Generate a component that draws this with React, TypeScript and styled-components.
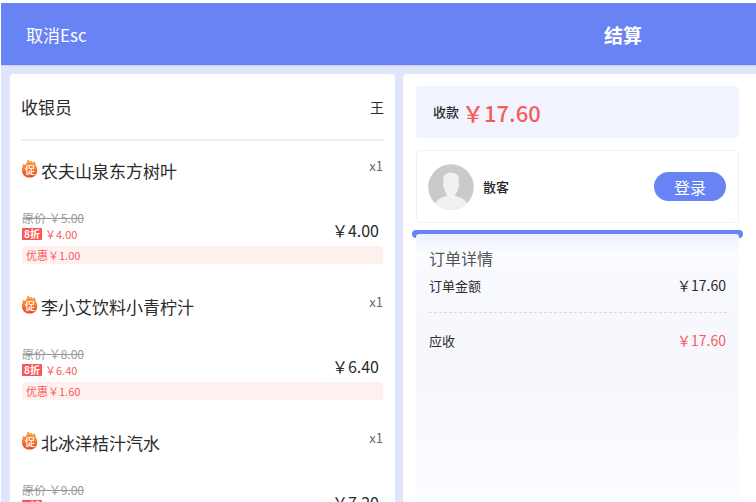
import React from "react";
import styled, { createGlobalStyle } from "styled-components";

const GlobalStyle = createGlobalStyle`
  *, *::before, *::after { box-sizing: border-box; }
  html, body, #root { height: 100%; }
  body {
    margin: 0;
    overflow: hidden;
    background: #fff;
    color: #2b2b2b;
    font-family: "Noto Sans CJK SC", "Noto Sans", sans-serif;
    font-size: 13px;
  }
  h1, h2, h3, p, ul, dl, dd { margin: 0; padding: 0; font-weight: 400; }
`;

const Page = styled.div`
  display: flex;
  flex-direction: column;
  height: 100%;
  padding: 3px 0 0 1px;
`;

const columns = "385fr 353fr";

const TopBar = styled.header`
  display: grid;
  grid-template-columns: ${columns};
  column-gap: 8px;
  align-items: center;
  flex: none;
  height: 63px;
  padding: 2px 0 0 9px;
  background: #6883f4;
  border-bottom: 1px solid #c8d2fb;
  color: #fff;
`;

const CancelButton = styled.button`
  justify-self: start;
  margin: 0;
  padding: 0 16px;
  border: 0;
  background: none;
  color: inherit;
  font: inherit;
  font-size: 17px;
  line-height: 24px;
`;

const PageTitle = styled.h1`
  padding-right: 114px;
  margin-left: auto;
  font-size: 19px;
  font-weight: 700;
  line-height: 28px;
`;

const Body = styled.main`
  display: grid;
  grid-template-columns: ${columns};
  column-gap: 8px;
  flex: 1;
  min-height: 0;
  padding: 8px 0 0 9px;
  background: #e0e5fc;
`;

const Panel = styled.section`
  min-width: 0;
  min-height: 0;
  overflow: hidden;
  background: #fff;
`;

const CartPanel = styled(Panel)`
  padding: 0 11px;
  border-radius: 4px 4px 0 0;
`;

const CashierRow = styled.div`
  display: flex;
  align-items: center;
  justify-content: space-between;
  height: 67px;
  border-bottom: 2px solid #eeeeee;
`;

const CashierLabel = styled.h2`
  font-size: 17px;
  line-height: 24px;
`;

const CashierName = styled.span`
  font-size: 14px;
  line-height: 20px;
`;

const ItemList = styled.ul`
  list-style: none;
`;

const Item = styled.li`
  height: 136px;
  padding: 16px 1px 0;
`;

const ItemHead = styled.div`
  display: flex;
  align-items: flex-start;
  height: 53px;
`;

const FlameIcon = styled.svg`
  flex: none;
  width: 16px;
  height: 20px;
  margin-top: 2px;
  margin-right: 3px;
`;

const ItemName = styled.h3`
  flex: 1;
  padding-top: 1px;
  font-size: 17px;
  line-height: 26px;
`;

const Quantity = styled.span`
  color: #666;
  font-size: 13px;
  line-height: 18px;
`;

const PriceRow = styled.div`
  display: flex;
  justify-content: space-between;
  height: 36px;
  padding-right: 4px;
`;

const OriginalPrice = styled.s`
  display: block;
  color: #999;
  font-size: 12px;
  line-height: 16px;
`;

const DiscountLine = styled.p`
  display: flex;
  align-items: center;
  gap: 3px;
  height: 16px;
  color: #f75b5b;
  font-size: 11px;
  line-height: 16px;
`;

const DiscountTag = styled.span`
  width: 20px;
  height: 12px;
  border-radius: 1px;
  background: #fb5656;
  color: #fff;
  font-size: 10px;
  font-weight: 700;
  line-height: 12px;
  text-align: center;
`;

const FinalPrice = styled.strong`
  padding-top: 8px;
  font-size: 16px;
  font-weight: 400;
  line-height: 24px;
`;

const Saving = styled.p`
  height: 18px;
  padding: 0 4px;
  border-radius: 3px;
  background: #fff0f0;
  color: #f75b5b;
  font-size: 11px;
  line-height: 18px;
`;

const CheckoutPanel = styled(Panel)`
  display: flex;
  flex-direction: column;
  padding: 12px 17px 0 13px;
  border-radius: 4px 0 0 0;
`;

const AmountBox = styled.div`
  display: flex;
  align-items: center;
  gap: 3px;
  flex: none;
  height: 52px;
  padding-left: 17px;
  border-radius: 4px;
  background: #f1f4fe;
`;

const StrongLabel = styled.span`
  font-weight: 500;
  line-height: 20px;
`;

const AmountValue = styled.strong`
  color: #f75b5b;
  font-size: 22px;
  font-weight: 500;
  line-height: 32px;
`;

const CustomerBox = styled.div`
  display: flex;
  align-items: center;
  gap: 9px;
  flex: none;
  height: 73px;
  margin-top: 12px;
  padding: 0 12px 0 11px;
  border: 1px solid #f1f1f2;
  border-radius: 4px;
`;

const Avatar = styled.svg`
  width: 46px;
  height: 46px;
`;

const LoginButton = styled.button`
  width: 72px;
  height: 29px;
  margin: 0 0 0 auto;
  padding: 0;
  border: 0;
  border-radius: 15px;
  background: #6883f4;
  color: #fff;
  font: inherit;
  font-size: 16px;
  line-height: 28px;
`;

const SlotBar = styled.div`
  flex: none;
  height: 8px;
  margin: 7px -4px 0;
  border-radius: 4px;
  background: #6883f4;
`;

const Receipt = styled.section`
  position: relative;
  flex: 1;
  margin-top: -4px;
  padding: 11px 11px 0 13px;
  border-radius: 3px 3px 0 0;
  background: linear-gradient(#edf1fe 0, #fbfcff 20px, #f9faff 40px, #f6f8fe 80px, #f7f8fe 160px, #fcfdff 100%);
`;

const ReceiptTitle = styled.h2`
  color: #555;
  font-size: 16px;
  line-height: 26px;
`;

const ReceiptRow = styled.div<{ $due?: boolean }>`
  display: flex;
  align-items: center;
  justify-content: space-between;
  height: ${(p) => (p.$due ? 54 : 28)}px;
  padding-right: 2px;

  dd {
    color: ${(p) => (p.$due ? "#f75b5b" : "inherit")};
    font-size: 14px;
  }
`;

const Divider = styled.svg`
  display: block;
  width: 100%;
  height: 1px;
  margin-top: 13px;
`;

const items = [
  { name: "农夫山泉东方树叶", original: "5.00", price: "4.00", saving: "1.00" },
  { name: "李小艾饮料小青柠汁", original: "8.00", price: "6.40", saving: "1.60" },
  { name: "北冰洋桔汁汽水", original: "9.00", price: "7.20", saving: "1.80" },
];

function PromoFlame() {
  return (
    <FlameIcon viewBox="0 0 16 20" role="img" aria-label="促销">
      <defs>
        <linearGradient id="flame" x1="0" y1="0" x2="0" y2="1">
          <stop offset="0" stopColor="#fda63c" />
          <stop offset="0.5" stopColor="#f97b30" />
          <stop offset="1" stopColor="#ea4a2b" />
        </linearGradient>
      </defs>
      <path
        d="M5.4 .6C7 1 8 2.2 8.2 3.4C8.8 3.1 9 2.5 8.9 1.8C10 2.2 10.7 3 10.9 3.9C11.8 3.5 12.4 2.8 12.6 2C13.5 3.4 13.2 5.2 13.7 6.6C14.8 8 15.2 9.6 15.2 11.4C15.2 15.6 12 18.6 7.8 18.6C3.4 18.6 0 15.6 0 11.4C0 9 .8 7 1.3 4.8C2 5.3 2.4 5.7 2.6 6.2C4.6 4.8 5.6 2.9 5.4 .6Z"
        fill="url(#flame)"
      />
      <text x="8" y="15" fill="#fff" fontSize="10" fontWeight="500" textAnchor="middle">促</text>
    </FlameIcon>
  );
}

function GuestAvatar() {
  return (
    <Avatar viewBox="0 0 46 46" aria-hidden="true">
      <defs>
        <clipPath id="avatar-clip">
          <circle cx="23" cy="23" r="22.8" />
        </clipPath>
      </defs>
      <g clipPath="url(#avatar-clip)">
        <rect width="46" height="46" fill="#cacaca" />
        <path
          d="M15.3 16C15 11.4 17.6 8.7 23 8.7C28.8 8.7 31.3 11.6 31 16.5L30.8 20C31.8 20.3 31.6 22.6 30.2 24.3C29.4 27.6 28.4 29.2 27.2 30.3L27.3 32.1C32.4 32.9 36.3 35.1 39 39.5L40 46H6L7.2 39.5C9.8 35.1 13.6 32.9 18.8 32.1L18.9 30.3C17.5 29 16.8 27.4 16.2 24.3C14.7 22.7 14.4 20.4 15.4 20Z"
          fill="#f0f1f3"
        />
      </g>
    </Avatar>
  );
}

export default function App() {
  return (
    <>
      <GlobalStyle />
      <Page>
        <TopBar>
          <CancelButton type="button">取消Esc</CancelButton>
          <PageTitle>结算</PageTitle>
        </TopBar>
        <Body>
          <CartPanel>
            <CashierRow>
              <CashierLabel>收银员</CashierLabel>
              <CashierName>王</CashierName>
            </CashierRow>
            <ItemList>
              {items.map((item) => (
                <Item key={item.name}>
                  <ItemHead>
                    <PromoFlame />
                    <ItemName>{item.name}</ItemName>
                    <Quantity>x1</Quantity>
                  </ItemHead>
                  <PriceRow>
                    <div>
                      <OriginalPrice>原价 ￥{item.original}</OriginalPrice>
                      <DiscountLine>
                        <DiscountTag>8折</DiscountTag>
                        <span>￥{item.price}</span>
                      </DiscountLine>
                    </div>
                    <FinalPrice>￥{item.price}</FinalPrice>
                  </PriceRow>
                  <Saving>优惠￥{item.saving}</Saving>
                </Item>
              ))}
            </ItemList>
          </CartPanel>
          <CheckoutPanel>
            <AmountBox>
              <StrongLabel>收款</StrongLabel>
              <AmountValue>￥17.60</AmountValue>
            </AmountBox>
            <CustomerBox>
              <GuestAvatar />
              <StrongLabel>散客</StrongLabel>
              <LoginButton type="button">登录</LoginButton>
            </CustomerBox>
            <SlotBar />
            <Receipt>
              <ReceiptTitle>订单详情</ReceiptTitle>
              <dl>
                <ReceiptRow>
                  <dt>订单金额</dt>
                  <dd>￥17.60</dd>
                </ReceiptRow>
                <Divider aria-hidden="true">
                  <line x1="0" y1="0.5" x2="100%" y2="0.5" stroke="#d9dade" strokeDasharray="3 2" />
                </Divider>
                <ReceiptRow $due>
                  <dt>应收</dt>
                  <dd>￥17.60</dd>
                </ReceiptRow>
              </dl>
            </Receipt>
          </CheckoutPanel>
        </Body>
      </Page>
    </>
  );
}
